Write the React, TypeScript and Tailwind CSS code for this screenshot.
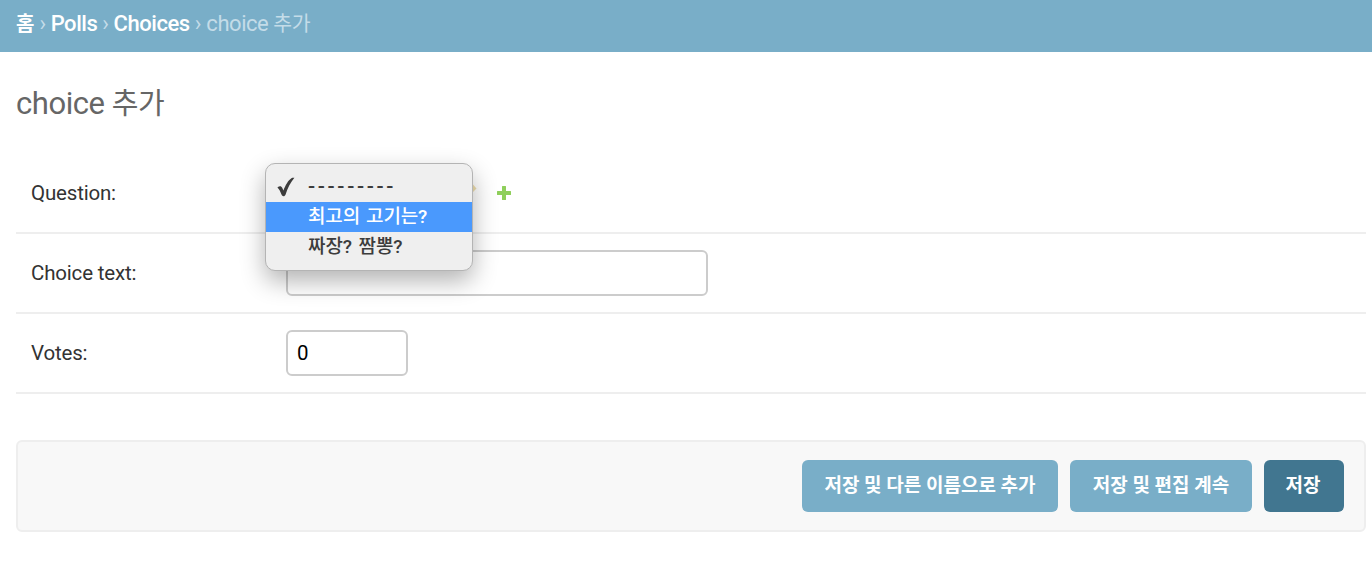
import type { ReactNode } from 'react';

function FormRow({ label, children }: { label: string; children?: ReactNode }) {
  return (
    <div className="relative flex h-20 items-center border-b-2 border-[#eee] pl-[15px]">
      <label className="w-[255px] shrink-0 text-[20.5px] leading-6 tracking-[-0.18px] text-[#333]">{label}</label>
      {children}
    </div>
  );
}

function QuestionMenu() {
  return (
    <ul className="absolute top-[9px] left-[249px] z-10 h-[108px] w-[208px] overflow-visible rounded-[10px] border border-[#b4b4b4] bg-[#efefef] pt-[8px] font-['Roboto','Noto_Sans_CJK_KR',sans-serif] text-[19px] font-medium text-[#3c3c3c] shadow-[0_10px_24px_rgba(0,0,0,0.3)]">
      <li className="flex h-[30px] items-center">
        <svg className="mr-[13px] ml-[11px] h-[20px] w-[18px] shrink-0" viewBox="0 0 18 20" fill="#3c3c3c">
          <path d="M0.4 10.6 C2.5 8.6 4.4 9 5.2 10.8 L6.4 13.6 C8.5 8.1 11.2 3.2 14.4 1.2 C15.5 .5 16.5 .6 17.4 .8 C13.6 5.2 10.4 11.6 8.6 17.4 C7.6 19.9 5.4 19.5 4.5 17.6 C3.3 14.6 2.4 12.5 .4 10.6Z" />
        </svg>
        <span className="text-[21px] tracking-[2.65px]">---------</span>
      </li>
      <li className="flex h-[30px] items-center bg-[#4a99fd] pl-[42px] text-white">
        <span className="tracking-[-0.15px] [word-spacing:1.5px] whitespace-nowrap">최고의 고기는?</span>
      </li>
      <li className="flex h-[30px] items-center pl-[42px]">
        <span className="tracking-[-0.1px] [word-spacing:2px] whitespace-nowrap">짜장? 짬뽕?</span>
      </li>
    </ul>
  );
}

export default function App() {
  return (
    <div className="h-[576px] w-[1372px] overflow-hidden bg-white font-['Roboto','Noto_Sans_CJK_KR',sans-serif]">
      <nav className="flex h-[52px] items-center gap-[5px] bg-[#79aec8] pb-[5px] pl-4 text-[22px] leading-6 tracking-[-0.45px] whitespace-nowrap text-[#c4dce8]">
        <a className="w-[18.5px] text-[20px] font-bold text-white">홈</a>
        <span>›</span>
        <a className="font-medium text-white">Polls</a>
        <span>›</span>
        <a className="font-medium text-white">Choices</a>
        <span>›</span>
        <span className="pl-[0.5px]">choice <span className="text-[20.5px]">추가</span></span>
      </nav>
      <main className="flex flex-col pr-[6px] pl-4">
        <h1 className="mt-[34px] h-[36px] text-[31px] leading-[36px] tracking-[-0.45px] whitespace-nowrap text-[#666]">
          choice <span className="text-[29px]">추가</span>
        </h1>
        <form className="mt-[32px]">
          <FormRow label="Question:">
            <QuestionMenu />
            <svg className="ml-[170px] h-[26px] w-[26px]" viewBox="0 0 26 26">
              <path d="M15 4.500 L17 4.500 L20.500 8.500 L17 12 L15 12Z" fill="#efdfae" />
            </svg>
            <svg className="ml-[15px] h-[14px] w-[14px]" viewBox="0 0 14 14">
              <path d="M5.5 0h3Q9 0 9 .5V5h4.5Q14 5 14 5.500v3Q14 9 13.500 9H9v4.500Q9 14 8.500 14h-3Q5 14 5 13.500V9H.5Q0 9 0 8.500v-3Q0 5 .5 5H5V.5Q5 0 5.500 0Z" fill="#8fcf5b" />
            </svg>
          </FormRow>
          <FormRow label="Choice text:">
            <input className="h-[46px] w-[422px] rounded-[6px] border-2 border-[#ccc] bg-white" />
          </FormRow>
          <FormRow label="Votes:">
            <input className="h-[46px] w-[122px] rounded-[6px] border-2 border-[#ccc] bg-white px-[9px] text-[20.5px] text-black" defaultValue="0" />
          </FormRow>
        </form>
        <div className="mt-[46px] flex h-[92px] items-center justify-end gap-3 rounded-[6px] border-2 border-[#eee] bg-[#f8f8f8] pr-5 text-[19px] font-bold whitespace-nowrap text-white">
          <button className="h-[52px] w-[256px] rounded-[6px] bg-[#79aec8]">저장 및 다른 이름으로 추가</button>
          <button className="h-[52px] w-[182px] rounded-[6px] bg-[#79aec8]">저장 및 편집 계속</button>
          <button className="h-[52px] w-[80px] rounded-[6px] bg-[#417690] pr-[2px]">저장</button>
        </div>
      </main>
    </div>
  );
}
